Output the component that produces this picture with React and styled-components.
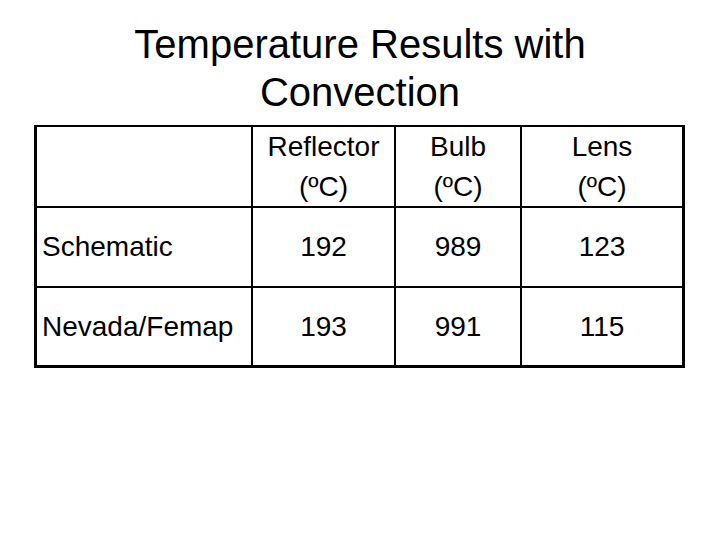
import React from "react";
import styled, { createGlobalStyle } from "styled-components";

const Global = createGlobalStyle`
  html, body { margin: 0; padding: 0; background: #fff; }
  body { font-family: "Liberation Sans", Arial, sans-serif; color: #000; }
`;

const Page = styled.div`
  width: 720px;
  height: 540px;
  display: flex;
  flex-direction: column;
  align-items: flex-start;
`;

const Title = styled.h1`
  margin: 0;
  padding-top: 20px;
  width: 720px;
  text-align: center;
  font-weight: normal;
  font-size: 40px;
  line-height: 48px;
`;

const Table = styled.div`
  margin-top: 9px;
  margin-left: 34px;
  display: grid;
  grid-template-columns: 214px 141px 124px 160px;
  grid-template-rows: 78px 78px 77px;
  gap: 2px;
  background: #000;
  border: 3px solid #000;
`;

const Cell = styled.div`
  background: #fff;
  font-size: 28px;
  display: flex;
  flex-direction: column;
  justify-content: ${(p) => (p.$head ? "flex-start" : "center")};
  align-items: ${(p) => (p.$label ? "flex-start" : "center")};
  padding-left: ${(p) => (p.$label ? "5px" : "0")};
  line-height: ${(p) => (p.$head ? "40px" : "32px")};
  margin-top: ${(p) => (p.$head ? "-1px" : "0")};
  overflow: visible;
  white-space: nowrap;
`;

const heads = ["Reflector", "Bulb", "Lens"];
const rows = [
  ["Schematic", "192", "989", "123"],
  ["Nevada/Femap", "193", "991", "115"],
];

export default function App() {
  return (
    <Page>
      <Global />
      <Title>
        Temperature Results with
        <br />
        Convection
      </Title>
      <Table>
        <Cell $head />
        {heads.map((h) => (
          <Cell $head key={h}>
            <span>{h}</span>
            <span>(ºC)</span>
          </Cell>
        ))}
        {rows.map((r) =>
          r.map((v, i) => (
            <Cell key={r[0] + i} $label={i === 0}>
              {v}
            </Cell>
          ))
        )}
      </Table>
    </Page>
  );
}
